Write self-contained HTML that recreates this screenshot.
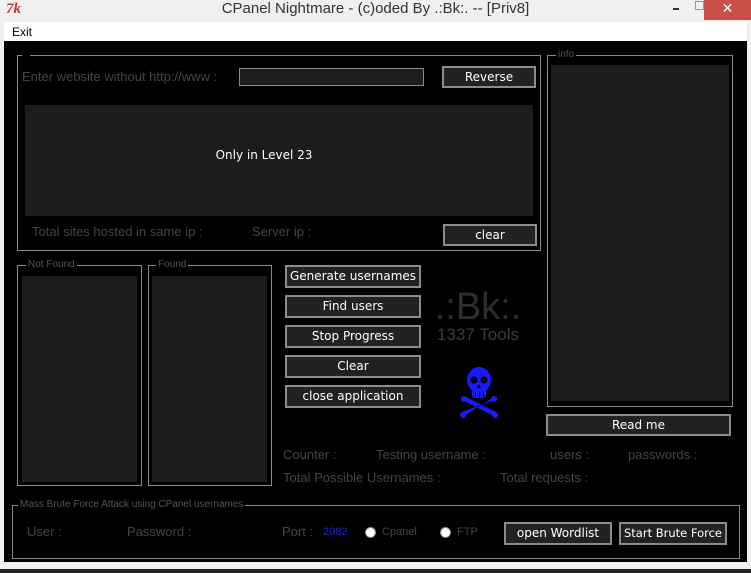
<!DOCTYPE html><html><head><style>
body{margin:0;width:751px;height:573px;background:#f0f0f0;font-family:"Liberation Sans",sans-serif;position:relative;overflow:hidden}
.a{position:absolute}
.t{position:absolute;color:#444;font-size:13px;white-space:nowrap}
.f{position:absolute;border:1px solid #8a8a8a}
.p{position:absolute;background:#1c1c1c}
.b{position:absolute;background:#222;border:2px solid #8c8c8c;color:#fff;font-size:12px;text-align:center;box-sizing:border-box;font-family:"DejaVu Sans",sans-serif}
.lg{position:absolute;background:#000;color:#555;font-size:10px;padding:0 2px;line-height:10px}
</style></head><body>
<div class="a" style="left:0;top:0;width:751px;height:22px;background:#f0f0f0"></div>
<div class="a" style="left:6px;top:1px;color:#c33;font-size:15px;font-weight:bold;font-style:italic;font-family:'Liberation Serif',serif">7k</div>
<div class="a" style="left:0;top:0;width:751px;text-align:center;font-size:15px;color:#333;line-height:18px">CPanel Nightmare - (c)oded By .:Bk:. -- [Priv8]</div>
<div class="a" style="left:673px;top:8px;width:6px;height:2px;background:#333"></div>
<div class="a" style="left:695px;top:1px;width:7px;height:7px;border:1px solid #999"></div>
<div class="a" style="left:704px;top:0;width:47px;height:20px;background:#c7504a;color:#fff;text-align:center;font-size:14px;line-height:16px">✕</div>
<div class="a" style="left:4px;top:22px;width:743px;height:19px;background:#fff"></div>
<div class="a" style="left:12px;top:25px;font-size:12px;color:#000">Exit</div>
<div class="a" style="left:4px;top:41px;width:743px;height:521px;background:#000"></div>
<div class="a" style="left:0;top:569px;width:751px;height:4px;background:#222"></div>

<div class="f" style="left:17px;top:55px;width:522px;height:194px"></div>
<div class="lg" style="left:22px;top:51px;width:4px;height:8px"></div>
<div class="t" style="left:22px;top:69px">Enter website without http://www :</div>
<div class="a" style="left:239px;top:68px;width:183px;height:16px;border:1px solid #888;background:#1e1e1e"></div>
<div class="b" style="left:442px;top:66px;width:94px;height:22px;line-height:18px">Reverse</div>
<div class="p" style="left:25px;top:105px;width:508px;height:111px"></div>
<div class="a" style="left:25px;top:148px;width:478px;text-align:center;color:#fff;font-size:12px;font-family:'DejaVu Sans',sans-serif">Only in Level 23</div>
<div class="t" style="left:32px;top:224px">Total sites hosted in same ip :</div>
<div class="t" style="left:252px;top:224px">Server ip :</div>
<div class="b" style="left:443px;top:224px;width:94px;height:22px;line-height:18px">clear</div>

<div class="f" style="left:547px;top:55px;width:184px;height:350px"></div>
<div class="lg" style="left:556px;top:50px">info</div>
<div class="p" style="left:551px;top:65px;width:178px;height:336px"></div>

<div class="f" style="left:17px;top:265px;width:123px;height:219px"></div>
<div class="lg" style="left:26px;top:260px">Not Found</div>
<div class="p" style="left:22px;top:276px;width:115px;height:206px"></div>
<div class="f" style="left:148px;top:265px;width:122px;height:219px"></div>
<div class="lg" style="left:156px;top:260px">Found</div>
<div class="p" style="left:152px;top:276px;width:115px;height:206px"></div>

<div class="b" style="left:285px;top:265px;width:136px;height:23px;line-height:19px">Generate usernames</div>
<div class="b" style="left:285px;top:295px;width:136px;height:23px;line-height:19px">Find users</div>
<div class="b" style="left:285px;top:325px;width:136px;height:23px;line-height:19px">Stop Progress</div>
<div class="b" style="left:285px;top:355px;width:136px;height:23px;line-height:19px">Clear</div>
<div class="b" style="left:285px;top:385px;width:136px;height:23px;line-height:19px">close application</div>

<div class="a" style="left:428px;top:287px;width:100px;text-align:center;color:#2e2e2e;font-size:38px;line-height:40px">.:Bk:.</div>
<div class="a" style="left:428px;top:325px;width:100px;text-align:center;color:#3c3c3c;font-size:17px">1337 Tools</div>
<svg class="a" style="left:460px;top:364px" width="38" height="56" viewBox="0 0 38 56">
<g fill="#1a1aff"><ellipse cx="19" cy="16" rx="12" ry="13"/><rect x="12" y="24" width="14" height="10" rx="3"/>
<path d="M4 37 L34 52 L36 48 L6 33Z M34 33 L4 52 L2 48 L32 37Z"/><circle cx="4" cy="35" r="3"/><circle cx="34" cy="35" r="3"/><circle cx="3" cy="51" r="3"/><circle cx="35" cy="51" r="3"/></g>
<g fill="#000"><circle cx="14" cy="16" r="3.5"/><circle cx="24" cy="16" r="3.5"/><path d="M19 20 L17 24 L21 24Z"/><rect x="15" y="28" width="1" height="5"/><rect x="19" y="28" width="1" height="5"/><rect x="23" y="28" width="1" height="5"/></g></svg>
<div class="b" style="left:546px;top:414px;width:185px;height:22px;line-height:18px">Read me</div>

<div class="t" style="left:283px;top:447px">Counter :</div>
<div class="t" style="left:376px;top:447px">Testing username :</div>
<div class="t" style="left:550px;top:447px">users :</div>
<div class="t" style="left:628px;top:447px">passwords :</div>
<div class="t" style="left:283px;top:470px">Total Possible Usernames :</div>
<div class="t" style="left:500px;top:470px">Total requests :</div>

<div class="f" style="left:12px;top:505px;width:726px;height:52px"></div>
<div class="lg" style="left:18px;top:500px">Mass Brute Force Attack using CPanel usernames</div>
<div class="t" style="left:27px;top:524px">User :</div>
<div class="t" style="left:127px;top:524px">Password :</div>
<div class="t" style="left:282px;top:524px">Port :</div>
<div class="a" style="left:323px;top:526px;color:#2222cc;font-size:11px">2082</div>
<div class="a" style="left:365px;top:527px;width:9px;height:9px;border-radius:50%;background:#fff;border:1px solid #888"></div>
<div class="t" style="left:382px;top:526px;font-size:11px">Cpanel</div>
<div class="a" style="left:440px;top:527px;width:9px;height:9px;border-radius:50%;background:#fff;border:1px solid #888"></div>
<div class="t" style="left:457px;top:526px;font-size:11px">FTP</div>
<div class="b" style="left:504px;top:522px;width:108px;height:23px;line-height:19px">open Wordlist</div>
<div class="b" style="left:619px;top:522px;width:108px;height:23px;line-height:19px;font-size:11.5px">Start Brute Force</div>
</body></html>
